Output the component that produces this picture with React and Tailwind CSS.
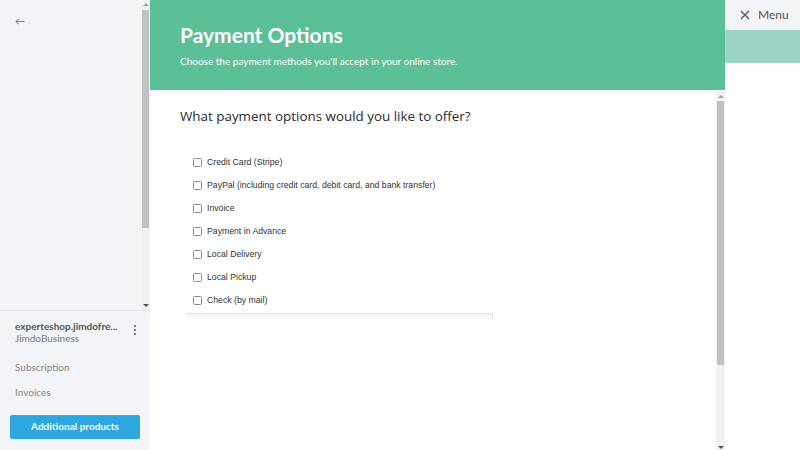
import React from 'react';

const options = [
  'Credit Card (Stripe)',
  'PayPal (including credit card, debit card, and bank transfer)',
  'Invoice',
  'Payment in Advance',
  'Local Delivery',
  'Local Pickup',
  'Check (by mail)',
];

const ScrollBar = ({ thumbTop, thumbHeight, className }) => (
  <div className={`w-[9px] flex flex-col bg-[#f1f1f1] ${className}`}>
    <div className="h-[9px] flex items-center justify-center">
      <div className="w-0 h-0 border-l-[3px] border-r-[3px] border-b-[3px] border-l-transparent border-r-transparent border-b-[#a3a3a3]" />
    </div>
    <div className="flex-1 flex flex-col">
      <div style={{ height: thumbTop }} />
      <div className="bg-[#c1c1c1] mx-[1px]" style={{ height: thumbHeight }} />
    </div>
    <div className="h-[9px] flex items-center justify-center">
      <div className="w-0 h-0 border-l-[3px] border-r-[3px] border-t-[3px] border-l-transparent border-r-transparent border-t-[#505050]" />
    </div>
  </div>
);

const Sidebar = () => (
  <aside className="w-[150px] shrink-0 h-full flex flex-col bg-[#f3f4f7] font-['Lato',sans-serif]">
    <div className="h-[311px] flex border-b border-[#e3e4e8]">
      <div className="flex-1 pl-[15px] pt-[7px]">
        <span className="text-[#666] text-[10px] leading-none">←</span>
      </div>
      <ScrollBar thumbTop={1} thumbHeight={218} className="h-full" />
    </div>
    <div className="px-[15px] pt-[9px] flex items-start justify-between pr-[14px]">
      <div className="leading-[12px]">
        <div className="text-[10px] font-bold text-[#555]">experteshop.jimdofre...</div>
        <div className="text-[10px] text-[#777]">JimdoBusiness</div>
      </div>
      <div className="flex flex-col gap-[2px] pt-[5px]">
        <span className="w-[2px] h-[2px] bg-[#555] rounded-full" />
        <span className="w-[2px] h-[2px] bg-[#555] rounded-full" />
        <span className="w-[2px] h-[2px] bg-[#555] rounded-full" />
      </div>
    </div>
    <div className="px-[15px] mt-[17px] text-[10px] leading-[12px] text-[#888]">Subscription</div>
    <div className="px-[15px] mt-[13px] text-[10px] leading-[12px] text-[#888]">Invoices</div>
    <div className="px-[10px] mt-[14px]">
      <button className="w-full h-[24px] rounded-[2px] bg-[#2ea6de] text-white text-[10px] font-bold">
        Additional products
      </button>
    </div>
  </aside>
);

const Main = () => (
  <main className="flex-1 h-full flex flex-col bg-white">
    <header className="h-[90px] shrink-0 bg-[#5bbf98] pl-[30px] pt-[21px] font-['Lato',sans-serif] text-white">
      <h1 className="text-[21px] font-bold leading-[28px]">Payment Options</h1>
      <p className="text-[10px] mt-[5px] leading-[14px]">Choose the payment methods you'll accept in your online store.</p>
    </header>
    <div className="flex-1 flex min-h-0">
      <div className="flex-1 pl-[30px] pt-[17px]">
        <h2 className="font-['Open_Sans',sans-serif] text-[13.4px] text-[#2a2a2a] leading-[18px]">
          What payment options would you like to offer?
        </h2>
        <ul className="mt-[26px] pl-[13px] font-['Liberation_Sans',Arial,sans-serif] text-[8.7px] text-[#333]">
          {options.map((o) => (
            <li key={o} className="h-[23px] flex items-center gap-[5px]">
              <span className="w-[9px] h-[9px] border border-[#8a8a8a] rounded-[1.5px] bg-white" />
              <span>{o}</span>
            </li>
          ))}
        </ul>
        <div className="ml-[6px] mt-[1px] w-[307px] h-[8px] border-t border-r border-[#e2e2e2] bg-gradient-to-b from-[#f4f4f4] to-white" />
      </div>
      <ScrollBar thumbTop={0} thumbHeight={264} className="h-full mt-[2px]" />
    </div>
  </main>
);

const RightPanel = () => (
  <aside className="w-[75px] shrink-0 h-full flex flex-col bg-white font-['Lato',sans-serif]">
    <div className="h-[30px] bg-[#f3f4f7] flex items-center pl-[15px] gap-[8px] text-[#555]">
      <svg width="10" height="10" viewBox="0 0 10 10" stroke="#555" strokeWidth="1.3">
        <path d="M1 1L9 9M9 1L1 9" />
      </svg>
      <span className="text-[12px]">Menu</span>
    </div>
    <div className="h-[33px] bg-[#9bd5c6]" />
  </aside>
);

export default function App() {
  return (
    <div className="w-[800px] h-[450px] flex overflow-hidden">
      <Sidebar />
      <Main />
      <RightPanel />
    </div>
  );
}
